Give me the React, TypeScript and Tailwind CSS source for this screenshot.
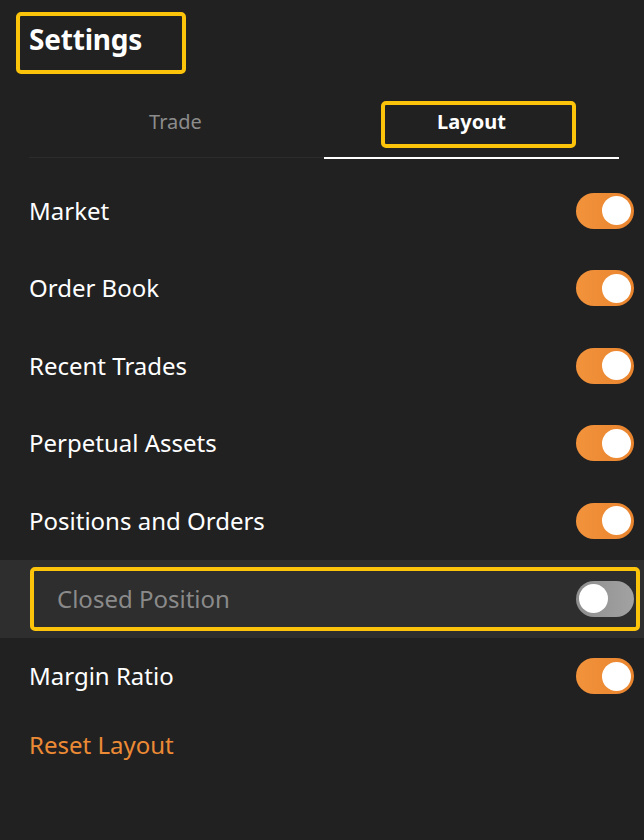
import { FunctionComponent } from "react";

const Toggle: FunctionComponent<{ on: boolean }> = ({ on }) => {
  return (
    <div
      className={
        on
          ? "w-[58px] h-[36px] rounded-full bg-gradient-to-r from-[#f2933c] to-[#e9842d] flex flex-row items-center justify-end px-[3px] shrink-0"
          : "w-[58px] h-[36px] rounded-full bg-gradient-to-r from-[#8e8e8e] to-[#a2a2a2] flex flex-row items-center justify-start px-[3px] shrink-0"
      }
    >
      <div className="w-[29px] h-[29px] rounded-full bg-white" />
    </div>
  );
};

const rows = [
  { label: "Market", on: true },
  { label: "Order Book", on: true },
  { label: "Recent Trades", on: true },
  { label: "Perpetual Assets", on: true },
  { label: "Positions and Orders", on: true },
  { label: "Closed Position", on: false, disabled: true },
  { label: "Margin Ratio", on: true },
];

const App: FunctionComponent = () => {
  return (
    <div className="w-full min-h-[840px] bg-[#212121] flex flex-col font-['Noto_Sans',sans-serif] text-white">
      <div className="pt-[12px] pl-[16px]">
        <div className="w-[170px] h-[62px] border-4 border-[#fcc30b] rounded-[5px] flex flex-row items-center pl-[9px]">
          <div className="text-[28px] leading-[34px] font-bold tracking-[-0.2px] pb-[8px]">Settings</div>
        </div>
      </div>
      <div className="mt-[27px] ml-[29px] mr-[25px] grid grid-cols-2">
        <div className="flex flex-col items-center border-b border-[#2c2c2c] h-[57px]">
          <div className="h-[47px] flex items-center pb-[5px] pr-[2px] text-[20px] text-[#8c8c8c]">Trade</div>
        </div>
        <div className="flex flex-col items-center h-[58px] border-b-2 border-white">
          <div className="ml-[13px] w-[195px] h-[47px] border-4 border-[#fcc30b] rounded-[5px] flex items-center justify-center pr-[13px] pb-[5px] text-[20px] font-bold">
            Layout
          </div>
        </div>
      </div>
      <div className="mt-[13px] flex flex-col">
        {rows.map((row) =>
          row.disabled ? (
            <div key={row.label} className="h-[78px] bg-[#2e2e2e] flex flex-row items-center pl-[30px] pr-[4px]">
              <div className="flex-1 h-[64px] border-4 border-[#fcc30b] rounded-[5px] flex flex-row items-center justify-between pl-[23px] pr-[2px]">
                <div className="text-[24px] text-[#8a8a8a]">{row.label}</div>
                <Toggle on={row.on} />
              </div>
            </div>
          ) : (
            <div key={row.label} className="h-[77.5px] flex flex-row items-center justify-between pl-[29px] pr-[10px]">
              <div className="text-[24px]">{row.label}</div>
              <Toggle on={row.on} />
            </div>
          )
        )}
      </div>
      <div className="mt-[15px] pl-[29px] text-[24px] leading-[30px] text-[#ec8a35]">Reset Layout</div>
    </div>
  );
};

export default App;
